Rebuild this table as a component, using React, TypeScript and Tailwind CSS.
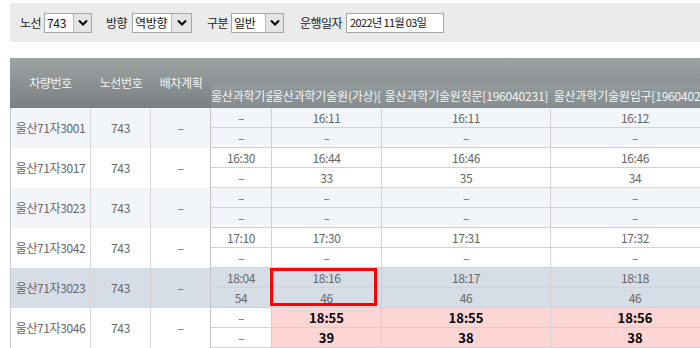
import React from "react";

type Row = {
  car: string;
  tone: "light" | "white" | "sel";
  st: [string, string][];
  pink?: boolean;
};

const D = "–";

const rows: Row[] = [
  { car: "울산71자3001", tone: "light", st: [[D, D], ["16:11", D], ["16:11", D], ["16:12", D]] },
  { car: "울산71자3017", tone: "white", st: [["16:30", D], ["16:44", "33"], ["16:46", "35"], ["16:46", "34"]] },
  { car: "울산71자3023", tone: "light", st: [[D, D], [D, D], [D, D], [D, D]] },
  { car: "울산71자3042", tone: "white", st: [["17:10", D], ["17:30", D], ["17:31", D], ["17:32", D]] },
  { car: "울산71자3023", tone: "sel", st: [["18:04", "54"], ["18:16", "46"], ["18:17", "46"], ["18:18", "46"]] },
  { car: "울산71자3046", tone: "white", pink: true, st: [[D, D], ["18:55", "39"], ["18:55", "38"], ["18:56", "38"]] },
];

const toneClass: Record<Row["tone"], string> = {
  light: "bg-[#f2f5fa]",
  white: "bg-white",
  sel: "bg-[#d7dde6]",
};

const stationWidths = ["w-[61px]", "w-[110px]", "w-[169px]", "w-[169px]"];
const stationNames = [
  "울산과학기술원(가상)[196040000]",
  "울산과학기술원(가상)[196040000]",
  "울산과학기술원정문[196040231]",
  "울산과학기술원입구[196040229]",
];

const font = { fontFamily: '"Noto Sans CJK KR", "DejaVu Sans", sans-serif' };

function Chevron() {
  return (
    <svg width="10" height="7" viewBox="0 0 10 7">
      <polyline points="1,1.5 5,5.5 9,1.5" fill="none" stroke="#000" strokeWidth="2" />
    </svg>
  );
}

function Select({ value, w, aw }: { value: string; w: string; aw: string }) {
  return (
    <div className={`${w} h-[20px] flex border border-[#a5a5a5] bg-white`}>
      <div className="flex-1 flex items-center pl-[2px] text-[12px] leading-none text-[#111] tracking-[-0.3px] overflow-hidden whitespace-nowrap">
        {value}
      </div>
      <div className={`${aw} h-full flex items-center justify-center bg-[#e4e4e4] border-l border-[#b8b8b8]`}>
        <Chevron />
      </div>
    </div>
  );
}

export default function App() {
  return (
    <div className="w-[700px] h-[348px] overflow-hidden bg-white pl-[10px] pt-[3px]" style={font}>
      {/* search bar */}
      <div className="h-[39px] bg-[#ebebeb] flex items-center pl-[10px] text-[12px] text-[#222] tracking-[-0.5px]">
        <div className="w-[24px]">노선</div>
        <Select value="743" w="w-[48px]" aw="w-[18px]" />
        <div className="w-[26px] ml-[14px]">방향</div>
        <Select value="역방향" w="w-[60px]" aw="w-[20px]" />
        <div className="w-[24px] ml-[15px]">구분</div>
        <Select value="일반" w="w-[53px]" aw="w-[18px]" />
        <div className="w-[46px] ml-[16px]">운행일자</div>
        <div className="w-[98px] h-[20px] border border-[#a5a5a5] bg-white flex items-center pl-[3px] text-[11px] tracking-[-0.6px] text-[#111] whitespace-nowrap">
          2022년 11월 03일
        </div>
      </div>

      {/* table */}
      <div className="relative mt-[16px] w-[720px]">
        {/* header */}
        <div className="flex h-[50px] bg-gradient-to-b from-[#9ea3a4] to-[#7a8082] text-[#f4f4f4] text-[12px] tracking-[-0.4px]">
          <div className="w-[81px] flex items-center justify-center">차량번호</div>
          <div className="w-[60px] flex items-center justify-center">노선번호</div>
          <div className="w-[60px] flex items-center justify-center">배차계획</div>
          <div className="flex flex-col">
            <div className="h-[26px]" />
            <div className="h-[24px] flex bg-gradient-to-b from-[#929a9b] to-[#858c8e]">
              {stationNames.map((n, i) => (
                <div key={i} className={`${stationWidths[i]} h-full flex items-center overflow-hidden`}>
                  <div className="w-full text-center whitespace-nowrap overflow-hidden tracking-[-0.2px]">{n}</div>
                </div>
              ))}
            </div>
          </div>
        </div>

        {/* rows */}
        {rows.map((r, ri) => (
          <div key={ri} className={`flex h-[40px] ${toneClass[r.tone]} text-[12px] text-[#666] tracking-[-0.4px]`}>
            <div className="w-[81px] border-l border-r border-l-[#c9c9c9] border-r-[#d6d6d6] flex items-center justify-center">
              {r.car}
            </div>
            <div className="w-[60px] border-r border-[#d6d6d6] flex items-center justify-center">743</div>
            <div className="w-[60px] border-r border-[#c4c4c4] flex items-center justify-center">{D}</div>
            {r.st.map((s, si) => {
              const pink = r.pink && si > 0;
              const cellCls = pink
                ? "bg-[#fdd5d5] text-black font-bold text-[13px] tracking-[0px]"
                : "";
              return (
                <div key={si} className={`${stationWidths[si]} flex flex-col border-r border-[#d2d2d2]`}>
                  <div className={`h-[20px] border-b border-[#d2d2d2] flex items-center justify-center ${cellCls}`}>
                    {s[0]}
                  </div>
                  <div className={`h-[20px] border-b border-[#d2d2d2] flex items-center justify-center ${cellCls}`}>
                    {s[1]}
                  </div>
                </div>
              );
            })}
          </div>
        ))}

        {/* highlight annotation */}
        <div className="absolute left-[260px] top-[210px] w-[107px] h-[38px] border-[3px] border-[#ff0000]" />
      </div>
    </div>
  );
}
